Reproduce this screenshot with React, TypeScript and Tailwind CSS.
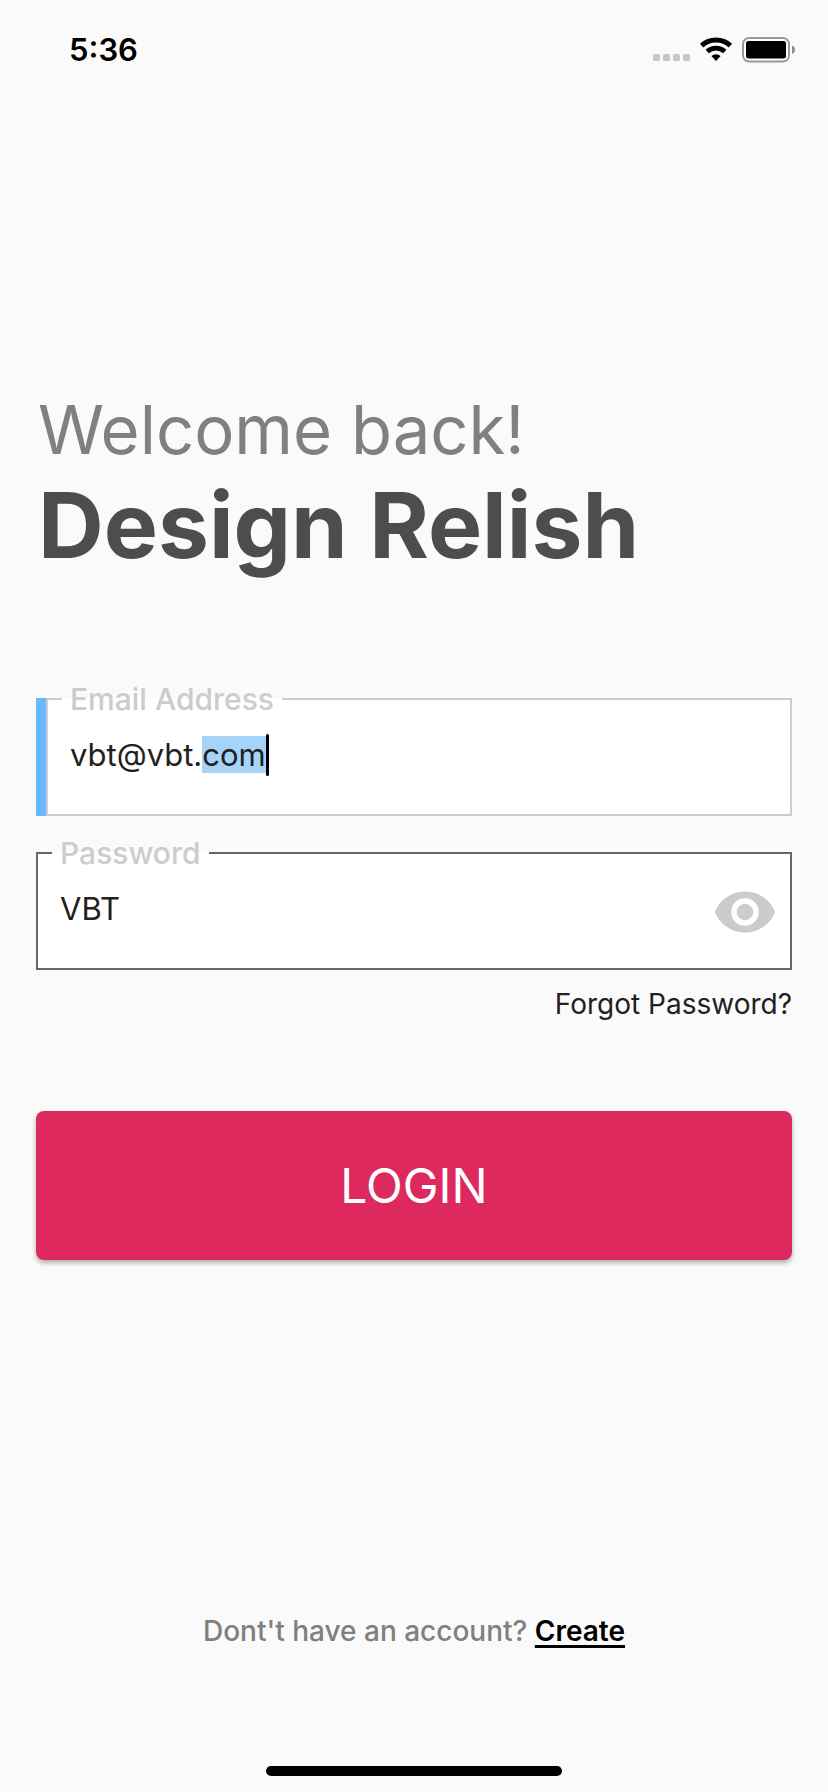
import { useEffect, useRef, useState } from "react";
import { MdVisibility } from "react-icons/md";

function StatusBar() {
  return (
    <header className="flex h-[100px] items-center justify-between pr-[33px] pl-[69px]">
      <time className="text-[31px] leading-9 font-semibold text-black">5:36</time>
      <div className="flex items-center gap-[10px]">
        <svg width="37" height="24" viewBox="0 0 37 24" fill="#c7c7c7" aria-hidden="true">
          <rect x="0" y="16" width="7" height="7" rx="1.5" />
          <rect x="10" y="16" width="7" height="7" rx="1.5" />
          <rect x="20" y="16" width="7" height="7" rx="1.5" />
          <rect x="30" y="16" width="7" height="7" rx="1.5" />
        </svg>
        <svg
          width="32"
          height="24"
          viewBox="0 0 32 24"
          fill="none"
          stroke="#000"
          className="overflow-visible"
          aria-hidden="true"
        >
          <path d="M1.6 7.6A21.1 21.1 0 0 1 30.4 7.6" strokeWidth="5" />
          <path d="M7.2 13.6A12.9 12.9 0 0 1 24.8 13.6" strokeWidth="4.8" />
          <path d="M16 23L11.4 18.1A6.7 6.7 0 0 1 20.6 18.1Z" fill="#000" stroke="none" />
        </svg>
        <svg width="53" height="26" viewBox="0 0 53 26" aria-hidden="true">
          <rect x="1" y="1" width="46" height="23.5" rx="6" fill="#fff" stroke="#999" strokeWidth="2" />
          <rect x="4" y="4" width="40" height="17.5" rx="2.5" fill="#000" />
          <path d="M50 8.5C52 9.2 53 10.8 53 12.8S52 16.4 50 17.1Z" fill="#8e8e8e" />
        </svg>
      </div>
    </header>
  );
}

export default function App() {
  const emailRef = useRef<HTMLInputElement>(null);
  const [email, setEmail] = useState("vbt@vbt.com");
  const [password, setPassword] = useState("VBT");
  const [visible, setVisible] = useState(true);

  useEffect(() => {
    emailRef.current?.focus();
    emailRef.current?.setSelectionRange(8, 11);
  }, []);

  return (
    <div className="flex min-h-screen flex-col bg-[#fafafa] font-['Inter',sans-serif]">
      <StatusBar />
      <main className="flex grow flex-col px-9 pt-[290px]">
        <h1 className="pl-[2px]">
          <span className="block text-[67px] leading-20 text-[#808080]">Welcome back!</span>
          <span className="block text-[91px] leading-[110px] font-bold text-[#4d4d4d]">Design Relish</span>
        </h1>

        <form className="mt-[101px] flex flex-col" onSubmit={(e) => e.preventDefault()}>
          <div className="relative flex">
            <div className="mt-[17px] w-[10px] bg-[#69b7ff]" />
            <fieldset className="h-[135px] min-w-0 grow border-2 border-[#cccccc] bg-white">
              <legend className="ml-[14px] px-2 text-[30px] leading-9 font-medium text-[#cccccc]">
                <label htmlFor="email">Email Address</label>
              </legend>
              <input
                ref={emailRef}
                id="email"
                type="text"
                value={email}
                onChange={(e) => setEmail(e.target.value)}
                className="block h-[74px] w-full bg-transparent px-[22px] text-[31px] text-[#212121] outline-none selection:bg-[#a5d4f8] selection:text-[#212121]"
              />
            </fieldset>
            <div className="absolute top-[53px] left-[230px] h-[42px] w-[3px] rounded-full bg-black" />
          </div>

          <fieldset className="mt-[19px] h-[135px] min-w-0 border-2 border-[#666666] bg-white">
            <legend className="ml-[14px] px-2 text-[30px] leading-9 font-medium text-[#cccccc]">
              <label htmlFor="password">Password</label>
            </legend>
            <div className="flex items-start pr-3">
              <input
                id="password"
                type={visible ? "text" : "password"}
                value={password}
                onChange={(e) => setPassword(e.target.value)}
                className="h-[74px] min-w-0 grow bg-transparent px-[22px] text-[31px] text-[#212121] outline-none"
              />
              <button
                type="button"
                aria-label="Toggle password visibility"
                onClick={() => setVisible(!visible)}
                className="pt-2 text-[#cccccc]"
              >
                <MdVisibility size={66} />
              </button>
            </div>
          </fieldset>

          <a href="#forgot" className="mt-4 self-end text-[28px] leading-9 text-[#212121]">
            Forgot Password?
          </a>

          <button
            type="submit"
            className="mt-[89px] h-[149px] w-full rounded-lg bg-[#de295f] text-[48px] text-white shadow-[0_3px_5px_rgba(0,0,0,0.3)]"
          >
            LOGIN
          </button>
        </form>

        <p className="mt-auto mb-[117px] text-center text-[28px] leading-9 font-medium text-[#808080]">
          Dont't have an account?{" "}
          <a href="#create" className="font-semibold text-black underline decoration-[3px] underline-offset-4">
            Create
          </a>
        </p>
      </main>
      <div className="mx-auto mb-4 h-[10px] w-[296px] rounded-full bg-black" />
    </div>
  );
}
